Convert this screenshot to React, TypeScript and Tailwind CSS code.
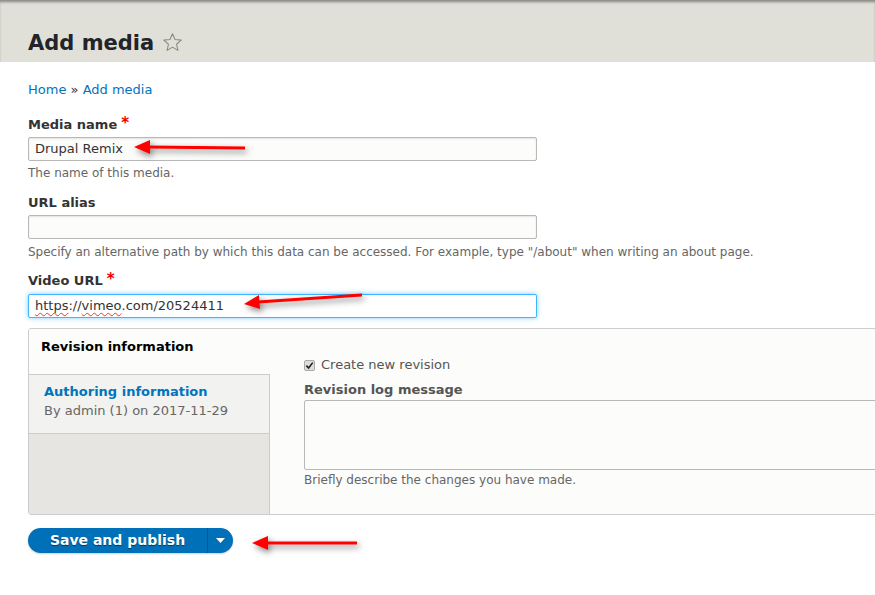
import React from "react";

const font = { fontFamily: '"DejaVu Sans", Verdana, sans-serif' };

const Label = ({ text, required }: { text: string; required?: boolean }) => (
  <div className="h-[18px] text-[13px] leading-[18px] font-bold text-[#333]">
    {text}
    {required && (
      <span className="ml-[4px] text-[#e00] text-[15px] leading-[0] align-[1px]">*</span>
    )}
  </div>
);

const Description = ({ children }: { children: React.ReactNode }) => (
  <div className="text-[12px] leading-[16px] text-[#666]">{children}</div>
);

const Arrows = () => (
  <svg
    className="absolute left-0 top-0 pointer-events-none"
    width="875"
    height="595"
    viewBox="0 0 875 595"
  >
    <defs>
      <filter id="sh" x="-20%" y="-80%" width="140%" height="260%">
        <feDropShadow dx="2" dy="3" stdDeviation="3" floodColor="#000" floodOpacity="0.5" />
      </filter>
    </defs>
    <g filter="url(#sh)" fill="#f00" stroke="#f00">
      <line x1="245" y1="148" x2="148" y2="147" strokeWidth="3" />
      <polygon points="134,147 150,140 150,154" stroke="none" />
      <line x1="362" y1="295" x2="258" y2="302" strokeWidth="3" />
      <polygon points="244,304 259,295 260,309" stroke="none" />
      <line x1="357" y1="543" x2="266" y2="543" strokeWidth="3" />
      <polygon points="252,543 268,536 268,550" stroke="none" />
    </g>
  </svg>
);

export default function App() {
  return (
    <div
      className="relative w-[875px] h-[595px] overflow-hidden bg-white text-[#333]"
      style={font}
    >
      {/* header */}
      <div className="h-[62px] bg-[#e0e0d8] shadow-[inset_0_3px_3px_-1px_rgba(0,0,0,0.4)] px-[28px] pt-[30px]">
        <h1 className="flex items-center text-[21px] leading-[26px] font-bold text-[#232429]">
          Add media
          <svg className="ml-[8px] -mt-[1px]" width="21" height="21" viewBox="0 0 24 24">
            <polygon
              points="12,2 14.9,8.6 22,9.3 16.6,14 18.2,21 12,17.3 5.8,21 7.4,14 2,9.3 9.1,8.6"
              fill="none"
              stroke="#8a8a80"
              strokeWidth="1.2"
              strokeLinejoin="round"
            />
          </svg>
        </h1>
      </div>

      <div className="px-[28px]">
        {/* breadcrumb */}
        <div className="mt-[18px] text-[13px] leading-[20px] text-[#0074bd]">
          Home <span className="text-[#333]">»</span> Add media
        </div>

        <div className="mt-[16px]">
          <Label text="Media name" required />
          <div className="mt-[3px] w-[509px] h-[24px] border border-[#b8b8b8] rounded-[2px] bg-[#fcfcfa] px-[6px] flex items-center text-[13px] text-[#333] shadow-[inset_0_1px_2px_rgba(0,0,0,0.1)]">
            Drupal Remix
          </div>
          <div className="mt-[4px]">
            <Description>The name of this media.</Description>
          </div>
        </div>

        <div className="mt-[13px]">
          <Label text="URL alias" />
          <div className="mt-[3px] w-[509px] h-[24px] border border-[#b8b8b8] rounded-[2px] bg-[#fcfcfa] shadow-[inset_0_1px_2px_rgba(0,0,0,0.1)]" />
          <div className="mt-[5px]">
            <Description>
              Specify an alternative path by which this data can be accessed. For example, type "/about" when writing an about page.
            </Description>
          </div>
        </div>

        <div className="mt-[12px]">
          <Label text="Video URL" required />
          <div className="mt-[4px] w-[509px] h-[24px] border border-[#40b6ff] rounded-[2px] bg-white px-[6px] flex items-center text-[13px] text-[#333] shadow-[0_0_5px_rgba(64,182,255,0.7)]">
            <span className="underline decoration-wavy decoration-[#e33] decoration-1 underline-offset-[2px]">https</span>
            ://
            <span className="underline decoration-wavy decoration-[#e33] decoration-1 underline-offset-[2px]">vimeo</span>
            .com/20524411
          </div>
        </div>

        {/* vertical tabs */}
        <div className="mt-[10px] w-[880px] h-[187px] flex border border-[#ccc] rounded-[3px] bg-[#fcfcfa] overflow-hidden">
          <div className="w-[241px] flex-none flex flex-col bg-[#e6e5e1] border-r border-[#ccc]">
            <div className="h-[46px] bg-[#fcfcfa] border-b border-[#ccc] -mr-[1px] px-[12px] pt-[10px] text-[13px] leading-[16px] font-bold text-black">
              Revision information
            </div>
            <div className="h-[59px] bg-[#f2f2f0] border-b border-[#ccc] px-[15px] pt-[8px]">
              <div className="text-[13px] leading-[18px] font-bold text-[#0074bd]">Authoring information</div>
              <div className="text-[13px] leading-[19px] text-[#666]">By admin (1) on 2017-11-29</div>
            </div>
          </div>
          <div className="flex-1 pl-[34px] pt-[28px]">
            <div className="flex items-center gap-[6px] text-[13px] leading-[16px] text-[#555]">
              <span className="w-[11px] h-[11px] rounded-[2px] bg-[#ddd] border border-[#aaa] flex items-center justify-center">
                <svg width="9" height="9" viewBox="0 0 10 10">
                  <path d="M1.5 5.2 L4 7.8 L8.6 1.8" fill="none" stroke="#222" strokeWidth="1.8" />
                </svg>
              </span>
              Create new revision
            </div>
            <div className="mt-[9px] text-[13px] leading-[16px] font-bold text-[#555]">Revision log message</div>
            <div className="mt-[2px] h-[70px] border border-[#b8b8b8] rounded-[2px] bg-[#fcfcfa]" />
            <div className="mt-[2px] text-[12px] leading-[16px] text-[#666]">
              Briefly describe the changes you have made.
            </div>
          </div>
        </div>

        {/* button */}
        <div className="mt-[13px] flex">
          <div className="h-[25px] flex rounded-full bg-[#0071b8] overflow-hidden text-white shadow-[0_1px_2px_rgba(0,0,0,0.2)]">
            <div className="w-[179px] flex items-center justify-center text-[14px] font-bold [text-shadow:0_1px_1px_rgba(0,0,0,0.5)]">
              Save and publish
            </div>
            <div className="w-[26px] border-l border-[#005a94] flex items-center justify-center">
              <svg width="9" height="5" viewBox="0 0 9 5">
                <polygon points="0,0 9,0 4.5,5" fill="#fff" />
              </svg>
            </div>
          </div>
        </div>
      </div>

      <Arrows />
    </div>
  );
}
